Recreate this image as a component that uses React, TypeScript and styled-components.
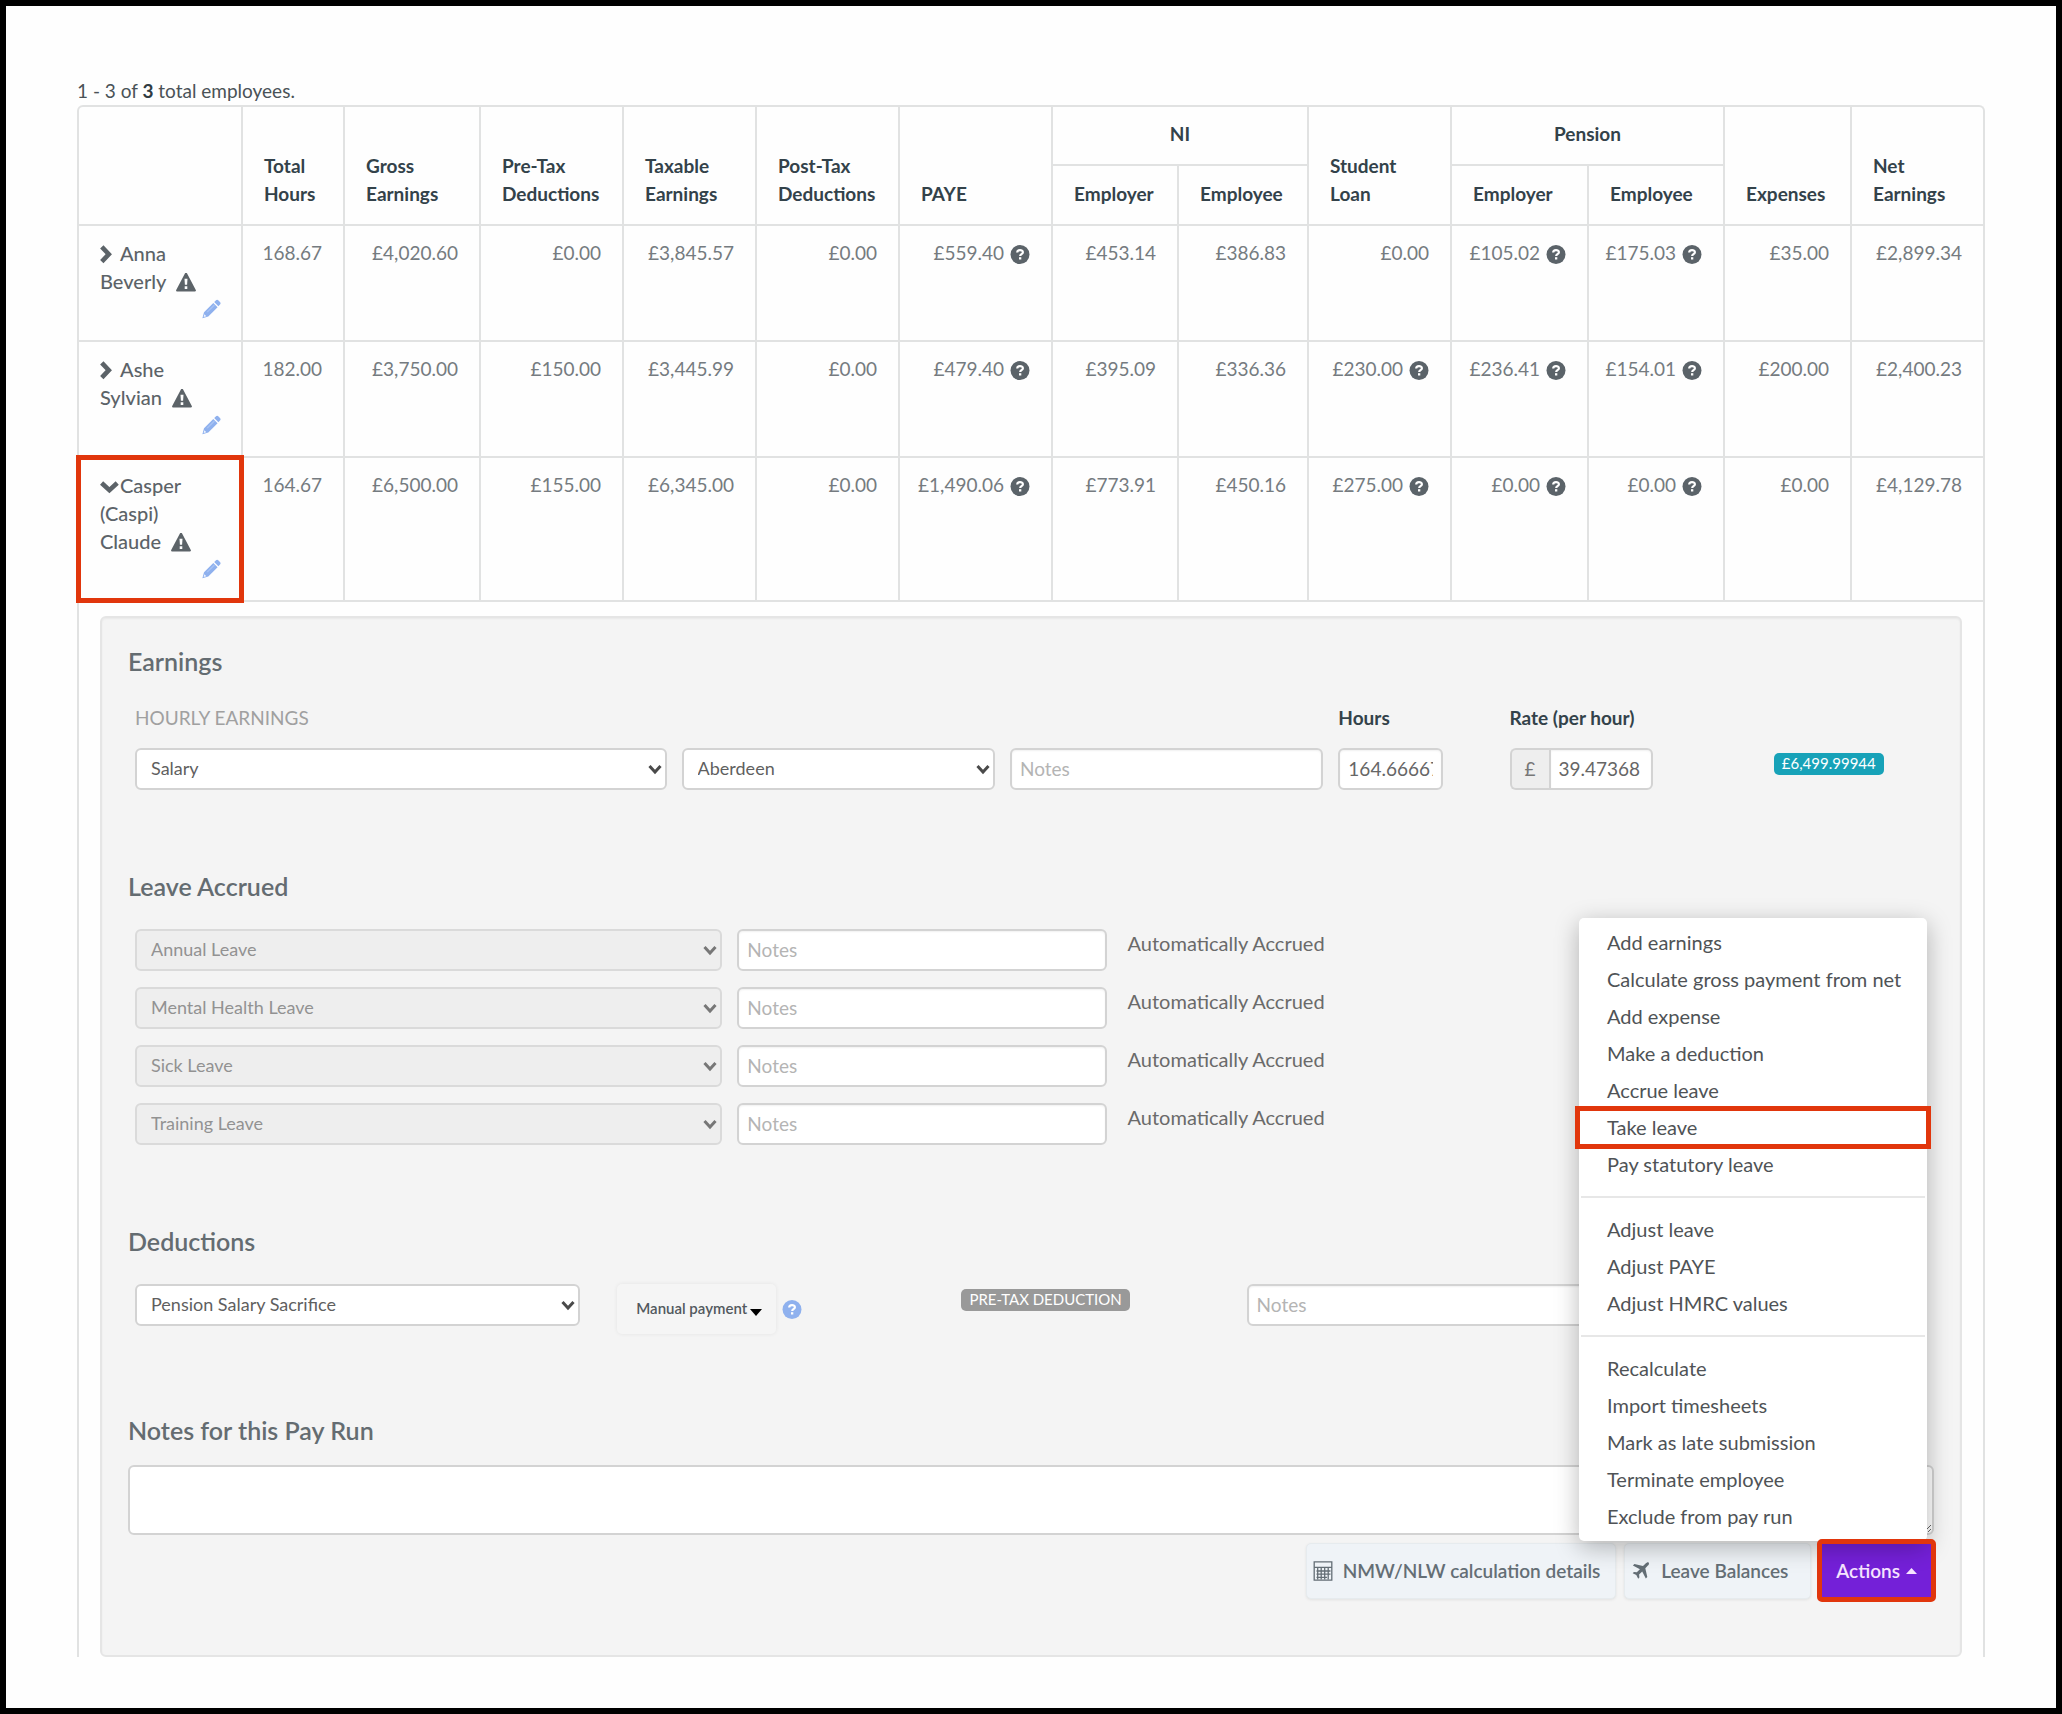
import React from "react";
import styled, { createGlobalStyle, css } from "styled-components";

const line = "#e1e2e2";
const alert = "#e1360c";

const GlobalStyle = createGlobalStyle`
  *, *::before, *::after { box-sizing: border-box; }
  body {
    margin: 0;
    background: #fff;
    color: #5c6368;
    font-family: Lato, "Open Sans", "Liberation Sans", sans-serif;
    font-size: 20px;
    line-height: 28px;
  }
  button, input, select, textarea { font: inherit; color: inherit; margin: 0; }
`;

const highlight = css<{ $marked?: boolean }>`
  position: relative;
  ${({ $marked }) =>
    $marked &&
    css`
      &::after {
        content: "";
        position: absolute;
        inset: -3px;
        border: 5px solid ${alert};
        pointer-events: none;
        z-index: 3;
      }
    `}
`;

const Page = styled.main`
  min-height: 100vh;
  padding: 71px 71px 45px;
  border: 6px solid #000;
  background: #fefefe;
`;

const Summary = styled.p`
  margin: 0;
  font-size: 19px;
  color: #4a5257;
  strong { color: #2f3b42; }
`;

const Table = styled.table`
  width: 100%;
  table-layout: fixed;
  border-collapse: separate;
  border-spacing: 0;
  border: 2px solid ${line};
  border-bottom: 0;
  border-radius: 6px 6px 0 0;
`;

const Head = styled.th`
  padding: 13px 14px 16px 21px;
  border-right: 2px solid ${line};
  border-bottom: 2px solid ${line};
  text-align: left;
  vertical-align: bottom;
  font-size: 19px;
  font-weight: 700;
  color: #33424a;
  &:last-child { border-right: 0; }
`;

const GroupHead = styled(Head)`
  padding: 13px 8px 16px;
  text-align: center;
`;

const SubHead = styled(Head)`
  padding-top: 14px;
  &:last-child { border-right: 2px solid ${line}; }
`;

const NameCell = styled.th`
  ${highlight}
  padding: 13px 20px 17px 21px;
  border-right: 2px solid ${line};
  border-bottom: 2px solid ${line};
  text-align: left;
  vertical-align: top;
`;

const Money = styled.td`
  padding: 13px 21px 17px 8px;
  border-right: 2px solid ${line};
  border-bottom: 2px solid ${line};
  text-align: right;
  vertical-align: top;
  white-space: nowrap;
  font-size: 19px;
  color: #757b80;
  &:last-child { border-right: 0; }
`;

const PlainButton = styled.button`
  padding: 0;
  border: 0;
  background: none;
  text-align: left;
  cursor: pointer;
  font-weight: 500;
`;

const EditRow = styled.div`
  display: flex;
  justify-content: flex-end;
  align-items: center;
  height: 28px;
`;

const EditLink = styled.a`
  display: flex;
  color: #8fb1ee;
`;

const NoWrap = styled.span`
  white-space: nowrap;
`;

const Icon = styled.svg<{ $gap?: number }>`
  width: 20px;
  height: 20px;
  margin-left: ${({ $gap = 0 }) => $gap}px;
  vertical-align: -4px;
  flex: none;
`;

const DetailCell = styled.td`
  padding: 14px 21px 0;
`;

const Panel = styled.section`
  padding: 27px 26px 56px;
  border: 2px solid #e5e5e5;
  border-radius: 6px;
  background: #f4f4f4;
  box-shadow: inset 0 1px 2px rgba(0, 0, 0, 0.05);
`;

const Group = styled.section`
  margin-bottom: 80px;
`;

const titleText = css`
  font-size: 25px;
  line-height: 32px;
  font-weight: 600;
  color: #646c71;
`;

const Title = styled.h2`
  ${titleText}
  margin: 0 0 27px;
`;

const FieldGrid = styled.div<{ $columns: string }>`
  display: grid;
  grid-template-columns: ${({ $columns }) => $columns};
  gap: 16px 15px;
  padding-left: 7px;
  align-items: start;
`;

const Caption = styled.span`
  grid-column: span 3;
  font-size: 19px;
  color: #a0a0a0;
`;

const FieldLabel = styled.label`
  font-size: 19px;
  font-weight: 700;
  color: #33424a;
`;

const boxed = css`
  display: block;
  width: 100%;
  height: 42px;
  border: 2px solid #d3d3d3;
  border-radius: 6px;
  background: #fff;
  outline: 0;
`;

const TextInput = styled.input`
  ${boxed}
  padding: 0 8px 1px;
  font-size: 19px;
  color: #666;
  box-shadow: inset 0 1px 2px rgba(0, 0, 0, 0.06);
  &::placeholder { color: #b4b4b4; opacity: 1; }
`;

const HoursInput = styled(TextInput)`
  width: 105px;
`;

const RateGroup = styled.div`
  display: flex;
  width: 143px;
`;

const Prefix = styled.span`
  width: 39px;
  border: 2px solid #d3d3d3;
  border-right: 0;
  border-radius: 6px 0 0 6px;
  background: #eee;
  font-size: 19px;
  line-height: 37px;
  text-align: center;
  color: #777;
`;

const RateInput = styled(TextInput)`
  flex: 1;
  min-width: 0;
  border-radius: 0 6px 6px 0;
`;

const SelectBox = styled.div`
  position: relative;
  svg {
    position: absolute;
    right: 5px;
    top: 16px;
    width: 14px;
    height: 11px;
    color: #4a4a4a;
    pointer-events: none;
  }
`;

const SelectField = styled.select`
  ${boxed}
  appearance: none;
  padding: 0 24px 2px 14px;
  font-size: 18px;
  color: #5f5f5f;
  &:disabled {
    background: #eeeeee;
    color: #929292;
    border-color: #dadada;
    opacity: 1;
  }
  &:disabled + svg { color: #777; }
`;

const Tag = styled.span<{ $tone: string }>`
  justify-self: start;
  height: 22px;
  margin-top: 5px;
  padding: 0 8px;
  border-radius: 5px;
  background: ${({ $tone }) => $tone};
  color: #fff;
  font-size: 15px;
  line-height: 20px;
  white-space: nowrap;
`;

const Accrued = styled.span`
  padding-left: 6px;
  color: #6a6a6a;
`;

const PaymentCell = styled.div`
  display: flex;
  align-items: center;
  gap: 6px;
  padding-left: 22px;
`;

const PaymentButton = styled.button`
  display: flex;
  align-items: center;
  gap: 3px;
  height: 50px;
  padding: 0 14px 3px 19px;
  border: 0;
  border-radius: 5px;
  background: #f5f5f5;
  box-shadow: 0 0 4px rgba(0, 0, 0, 0.07);
  font-size: 15px;
  font-weight: 600;
  color: #52595e;
  white-space: nowrap;
`;

const Caret = styled.svg`
  width: 12px;
  height: 8px;
  margin-top: 8px;
`;

const NotesTitle = styled.label`
  ${titleText}
  display: block;
  margin-bottom: 19px;
`;

const NotesArea = styled.textarea`
  ${boxed}
  height: 70px;
  padding: 8px;
  resize: vertical;
`;

const Footer = styled.footer`
  display: flex;
  justify-content: flex-end;
  gap: 8px;
  margin-top: 8px;
`;

const FooterButton = styled.button`
  display: flex;
  align-items: center;
  gap: 10px;
  min-width: 187px;
  height: 56px;
  padding: 0 15px 0 6px;
  border: 1px solid #e6ebee;
  border-radius: 5px;
  background: #eff3f7;
  box-shadow: 0 1px 3px rgba(0, 0, 0, 0.08);
  font-size: 19px;
  font-weight: 600;
  color: #646e75;
  white-space: nowrap;
`;

const ActionsWrap = styled.div`
  position: relative;
`;

const ActionsButton = styled.button<{ $marked?: boolean }>`
  ${highlight}
  display: flex;
  align-items: center;
  gap: 6px;
  height: 56px;
  padding: 0 17px;
  border: 0;
  border-radius: 4px;
  background: #7420d8;
  color: #f6e4ff;
  font-size: 19px;
  font-weight: 600;
  &::after {
    inset: -4px -2px -3px;
    border-radius: 5px;
  }
`;

const Menu = styled.ul`
  position: absolute;
  right: 7px;
  bottom: calc(100% + 2px);
  z-index: 2;
  width: 348px;
  margin: 0;
  padding: 6px 0;
  list-style: none;
  border-radius: 5px;
  background: #fff;
  box-shadow: 0 6px 24px rgba(0, 0, 0, 0.28);
`;

const MenuItem = styled.li<{ $marked?: boolean }>`
  ${highlight}
  height: 37px;
  &::after { inset: -3px -4px; }
`;

const MenuLink = styled.a`
  display: block;
  padding: 0 28px;
  line-height: 37px;
  color: #4f5356;
  text-decoration: none;
  white-space: nowrap;
`;

const Divider = styled.li`
  height: 2px;
  margin: 13px 2px;
  background: #e7e7e7;
`;

const ChevronRight = () => (
  <Icon viewBox="0 0 20 20" aria-hidden="true">
    <path d="M1.800 1.800 8.800 9.200 1.800 16.600" fill="none" stroke="currentColor" strokeWidth="4.6" />
  </Icon>
);

const ChevronDown = () => (
  <Icon viewBox="0 0 20 20" aria-hidden="true">
    <path d="M1.600 6 9.400 13.200 17.200 6" fill="none" stroke="currentColor" strokeWidth="4.6" />
  </Icon>
);

const Warning = () => (
  <Icon viewBox="0 0 20 20" $gap={10} role="img" aria-label="Warning">
    <path
      fillRule="evenodd"
      fill="currentColor"
      d="M8.900.4c.5-.9 1.700-.9 2.200 0l8.700 16.600c.4.800 0 1.500-.9 1.500H1.100c-.9 0-1.300-.7-.9-1.500zM8.500 5.700l.4 6h2.200l.4-6zM8.700 13.300v2.600h2.600v-2.600z"
    />
  </Icon>
);

const Pencil = () => (
  <Icon viewBox="0 0 20 20" aria-hidden="true">
    <path
      fill="currentColor"
      d="M13.200 3 14.800 1.400c.8-.8 1.900-.8 2.700 0l1.500 1.500c.8.800.8 1.900 0 2.700l-1.600 1.600zM12.300 3.900l4.300 4.300-9.300 9.400-5.900 1.600 1.600-5.900z"
    />
    <path d="M3.400 15.300 5.300 17.200 2.700 17.900z" fill="#f3f7fe" />
    <path d="M6.200 13.200 13.400 6" stroke="#a9c4f4" strokeWidth="1.200" />
  </Icon>
);

const Help = ({ tone = "#5b6369", gap = 6 }: { tone?: string; gap?: number }) => (
  <Icon viewBox="0 0 20 20" $gap={gap} role="img" aria-label="Help">
    <circle cx="10" cy="10.500" r="9.500" fill={tone} />
    <path
      d="M7.200 8.600c0-3.400 5.700-3.200 5.700-.4 0 1.900-2.700 2-2.700 3.700"
      fill="none"
      stroke="#fff"
      strokeWidth="2.200"
    />
    <rect x="9" y="13.200" width="2.300" height="2.300" fill="#fff" />
  </Icon>
);

const Calculator = () => (
  <Icon viewBox="0 0 20 20" aria-hidden="true">
    <path
      d="M1.200.8h17.600v18.400H1.200zM1.200 6.300h17.600M3.500 10h14M3.500 13.200h14M3.500 16.400h10.500M4.700 7v11.200M8.200 7v11.200M11.700 7v11.200M15.200 7v11.200"
      fill="none"
      stroke="currentColor"
      strokeWidth="1.300"
    />
  </Icon>
);

const Plane = () => (
  <Icon viewBox="0 0 20 20" aria-hidden="true">
    <path
      fill="currentColor"
      d="M17.600 1.400c.8.800.3 2.200-.7 3.200l-2.600 2.600 2 8.800-1.500 1.500-3.600-7-3.100 3.100.3 2.900-1.200 1.200-1.900-3.600L1.700 12.200l1.200-1.200 2.900.3 3.100-3.100-7-3.600L3.400 3.100l8.600 2 2.600-2.600c1-1 2.200-1.700 3-1.100z"
    />
  </Icon>
);

const SelectArrow = () => (
  <svg viewBox="0 0 14 11" aria-hidden="true">
    <path d="M1.500 2 7 8l5.500-6" fill="none" stroke="currentColor" strokeWidth="3" />
  </svg>
);

type SelectProps = { label: string; value: string; disabled?: boolean };

const Select = ({ label, value, disabled }: SelectProps) => (
  <SelectBox>
    <SelectField aria-label={label} disabled={disabled} defaultValue={value}>
      <option>{value}</option>
    </SelectField>
    <SelectArrow />
  </SelectBox>
);

const columns = [164, 102, 136, 143, 133, 143, 153, 126, 130, 143, 137, 136, 127, 131];

const helpColumns = [5, 8, 9, 10];

type Employee = {
  first: string;
  last: string;
  open?: boolean;
  values: string[];
  help: number[];
};

const employees: Employee[] = [
  {
    first: "Anna",
    last: "Beverly",
    values: ["168.67", "£4,020.60", "£0.00", "£3,845.57", "£0.00", "£559.40", "£453.14", "£386.83", "£0.00", "£105.02", "£175.03", "£35.00", "£2,899.34"],
    help: helpColumns.filter((c) => c !== 8),
  },
  {
    first: "Ashe",
    last: "Sylvian",
    values: ["182.00", "£3,750.00", "£150.00", "£3,445.99", "£0.00", "£479.40", "£395.09", "£336.36", "£230.00", "£236.41", "£154.01", "£200.00", "£2,400.23"],
    help: helpColumns,
  },
  {
    first: "Casper (Caspi)",
    last: "Claude",
    open: true,
    values: ["164.67", "£6,500.00", "£155.00", "£6,345.00", "£0.00", "£1,490.06", "£773.91", "£450.16", "£275.00", "£0.00", "£0.00", "£0.00", "£4,129.78"],
    help: helpColumns,
  },
];

const menuGroups = [
  ["Add earnings", "Calculate gross payment from net", "Add expense", "Make a deduction", "Accrue leave", "Take leave", "Pay statutory leave"],
  ["Adjust leave", "Adjust PAYE", "Adjust HMRC values"],
  ["Recalculate", "Import timesheets", "Mark as late submission", "Terminate employee", "Exclude from pay run"],
];

const leaves = ["Annual Leave", "Mental Health Leave", "Sick Leave", "Training Leave"];

const EmployeeRow = ({ person }: { person: Employee }) => (
  <tr>
    <NameCell scope="row" $marked={person.open}>
      <PlainButton type="button" aria-expanded={!!person.open}>
        {person.open ? <ChevronDown /> : <ChevronRight />}
        {person.first}{" "}
        <NoWrap>
          {person.last}
          <Warning />
        </NoWrap>
      </PlainButton>
      <EditRow>
        <EditLink href="#edit" aria-label={`Edit ${person.first} ${person.last}`}>
          <Pencil />
        </EditLink>
      </EditRow>
    </NameCell>
    {person.values.map((value, i) => (
      <Money key={i}>
        {value}
        {person.help.includes(i) && <Help />}
      </Money>
    ))}
  </tr>
);

const ActionsMenu = () => (
  <Menu>
    {menuGroups.map((group, g) => (
      <React.Fragment key={g}>
        {g > 0 && <Divider role="separator" />}
        {group.map((item) => (
          <MenuItem key={item} $marked={item === "Take leave"}>
            <MenuLink href="#action">{item}</MenuLink>
          </MenuItem>
        ))}
      </React.Fragment>
    ))}
  </Menu>
);

const PayDetails = () => (
  <Panel>
    <Group>
      <Title>Earnings</Title>
      <FieldGrid $columns="531fr 313fr 313fr 156fr 249fr 160fr">
        <Caption>HOURLY EARNINGS</Caption>
        <FieldLabel htmlFor="hours">Hours</FieldLabel>
        <FieldLabel htmlFor="rate">Rate (per hour)</FieldLabel>
        <span />
        <Select label="Pay item" value="Salary" />
        <Select label="Location" value="Aberdeen" />
        <TextInput placeholder="Notes" aria-label="Earnings notes" />
        <HoursInput id="hours" defaultValue="164.66667" />
        <RateGroup>
          <Prefix>£</Prefix>
          <RateInput id="rate" defaultValue="39.47368" />
        </RateGroup>
        <Tag $tone="#17a2b8">£6,499.99944</Tag>
      </FieldGrid>
    </Group>
    <Group>
      <Title>Leave Accrued</Title>
      <FieldGrid $columns="587fr 369fr 812fr">
        {leaves.map((leave) => (
          <React.Fragment key={leave}>
            <Select label="Leave type" value={leave} disabled />
            <TextInput placeholder="Notes" aria-label={`${leave} notes`} />
            <Accrued>Automatically Accrued</Accrued>
          </React.Fragment>
        ))}
      </FieldGrid>
    </Group>
    <Group>
      <Title>Deductions</Title>
      <FieldGrid $columns="445fr 351fr 270fr 600fr 72fr">
        <Select label="Deduction" value="Pension Salary Sacrifice" />
        <PaymentCell>
          <PaymentButton type="button">
            Manual payment
            <Caret viewBox="0 0 12 8" aria-hidden="true">
              <path d="M0 1h12L6 8z" fill="#000" />
            </Caret>
          </PaymentButton>
          <Help tone="#8fb1ee" gap={0} />
        </PaymentCell>
        <Tag $tone="#999">PRE-TAX DEDUCTION</Tag>
        <TextInput placeholder="Notes" aria-label="Deduction notes" />
      </FieldGrid>
    </Group>
    <NotesTitle htmlFor="run-notes">Notes for this Pay Run</NotesTitle>
    <NotesArea id="run-notes" />
    <Footer>
      <FooterButton type="button">
        <Calculator />
        NMW/NLW calculation details
      </FooterButton>
      <FooterButton type="button">
        <Plane />
        Leave Balances
      </FooterButton>
      <ActionsWrap>
        <ActionsButton type="button" aria-haspopup="true" aria-expanded="true" $marked>
          Actions
          <svg width="11" height="6" viewBox="0 0 11 6" aria-hidden="true">
            <path d="M0 6h11L5.500 0z" fill="currentColor" />
          </svg>
        </ActionsButton>
        <ActionsMenu />
      </ActionsWrap>
    </Footer>
  </Panel>
);

export default function App() {
  return (
    <>
      <GlobalStyle />
      <Page>
        <Summary>
          1 - 3 of <strong>3</strong> total employees.
        </Summary>
        <Table>
          <colgroup>
            {columns.map((width, i) => (
              <col key={i} style={{ width }} />
            ))}
          </colgroup>
          <thead>
            <tr>
              <Head rowSpan={2} aria-label="Employee" />
              <Head rowSpan={2}>Total Hours</Head>
              <Head rowSpan={2}>Gross Earnings</Head>
              <Head rowSpan={2}>Pre-Tax Deductions</Head>
              <Head rowSpan={2}>Taxable Earnings</Head>
              <Head rowSpan={2}>Post-Tax Deductions</Head>
              <Head rowSpan={2}>PAYE</Head>
              <GroupHead colSpan={2}>NI</GroupHead>
              <Head rowSpan={2}>Student Loan</Head>
              <GroupHead colSpan={2}>Pension</GroupHead>
              <Head rowSpan={2}>Expenses</Head>
              <Head rowSpan={2}>Net Earnings</Head>
            </tr>
            <tr>
              <SubHead>Employer</SubHead>
              <SubHead>Employee</SubHead>
              <SubHead>Employer</SubHead>
              <SubHead>Employee</SubHead>
            </tr>
          </thead>
          <tbody>
            {employees.map((person) => (
              <EmployeeRow key={person.last} person={person} />
            ))}
            <tr>
              <DetailCell colSpan={14}>
                <PayDetails />
              </DetailCell>
            </tr>
          </tbody>
        </Table>
      </Page>
    </>
  );
}
